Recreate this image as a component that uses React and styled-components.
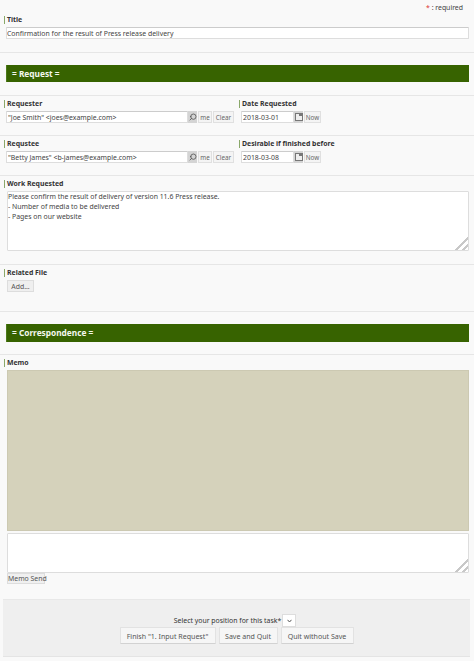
import styled, { createGlobalStyle } from 'styled-components';
import { Search } from 'lucide-react';

const GlobalStyle = createGlobalStyle`
    html, body {
        margin: 0;
        padding: 0;
        background: #f9f9f9;
    }
    * {
        box-sizing: border-box;
    }
`;

const Page = styled.div`
    width: 474px;
    height: 661px;
    overflow: hidden;
    color: #333;
    font-family: "Noto Sans", "Open Sans", sans-serif;
    font-size: 6.9px;
    background: #f9f9f9;
`;

const RequiredNote = styled.div`
    height: 15px;
    padding: 3px 11px 0 0;
    line-height: 9px;
    text-align: right;
    color: #444;

    span {
        color: #d33;
    }
`;

const Section = styled.section`
    border-top: 1px solid ${props => props.$plain ? 'transparent' : '#e6e6e6'};
    height: ${props => props.$height}px;
    padding-top: ${props => props.$top ?? 4}px;
`;

const Label = styled.div`
    margin-left: ${props => props.$left ?? 4}px;
    height: 8px;
    padding-left: 2px;
    border-left: 1px solid #8aa86a;
    line-height: 7px;
    font-size: 6.9px;
    font-weight: 700;
    color: #333;
`;

const TextBox = styled.input`
    display: block;
    flex: none;
    width: ${props => props.$width}px;
    height: 12px;
    margin: 0;
    padding: 0 1px;
    border: 1px solid #ddd;
    border-top-color: #ccc;
    border-radius: 1px;
    background: #fff;
    color: #444;
    font: inherit;
    outline: none;
`;

const TitleBox = styled(TextBox)`
    margin: 3px 0 0 6px;
    padding: 0;
`;

const Banner = styled.h2`
    margin: 12px 5px 0 6px;
    height: ${props => props.$height ?? 17}px;
    padding-left: 5px;
    background: #376300;
    border-left: 1px solid #4d7a1a;
    color: #f4f8ee;
    font-size: 8.3px;
    font-weight: 700;
    line-height: ${props => props.$height ?? 17}px;
`;

const Columns = styled.div`
    display: flex;
`;

const Column = styled.div`
    flex: none;
    width: ${props => props.$width}px;
`;

const Controls = styled.div`
    display: flex;
    align-items: center;
    margin: 3px 0 0 ${props => props.$left ?? 6}px;
`;

const SmallButton = styled.button`
    flex: none;
    width: ${props => props.$width}px;
    height: 12px;
    margin: 0 0 0 1px;
    padding: 0;
    border: 1px solid #e0e0e0;
    background: #f4f4f4;
    color: #666;
    font: inherit;
    font-size: 6.3px;
    line-height: 9px;
`;

const IconButton = styled.span`
    display: flex;
    align-items: center;
    justify-content: center;
    flex: none;
    width: 9px;
    height: 12px;
    background: #d4d4d4;
    color: #555;
`;

const MagnifierIcon = styled(Search)`
    width: 8px;
    height: 8px;
    transform: scaleX(-1);
`;

const TextArea = styled.textarea`
    display: block;
    width: 462px;
    height: ${props => props.$height}px;
    margin: ${props => props.$top ?? 0}px 0 0 7px;
    padding: 0;
    border: 1px solid #ddd;
    border-radius: 1px;
    background: #fff;
    color: #444;
    font: inherit;
    line-height: 10px;
    outline: none;

    &::-webkit-resizer {
        background: linear-gradient(135deg, transparent 55%, #c8c8c8 55%, #c8c8c8 65%, transparent 65%, transparent 78%, #c8c8c8 78%, #c8c8c8 88%, transparent 88%);
    }
`;

const AddButton = styled.button`
    display: block;
    width: 27px;
    height: 12px;
    margin: 3px 0 0 7px;
    padding: 0;
    border: 1px solid #ddd;
    background: #efefef;
    color: #555;
    font: inherit;
    line-height: 9px;
`;

const MemoLog = styled.div`
    width: 462px;
    height: 161px;
    margin: 3px 0 0 7px;
    background: #d5d2bb;
    border: 1px solid #ccc9b2;
`;

const MemoSend = styled.button`
    display: block;
    width: 38px;
    height: 11px;
    margin: 0 0 0 7px;
    padding: 0;
    border: 1px solid #ddd;
    background: #f0f0f0;
    color: #555;
    font: inherit;
    line-height: 9px;
    white-space: nowrap;
`;

const Footer = styled.footer`
    display: flex;
    flex-direction: column;
    align-items: center;
    width: 467px;
    height: 58px;
    margin: 15px 0 0 3px;
    padding-top: 14px;
    background: #efefef;
    border-top: 1px solid #e8e8e8;
    border-bottom: 1px solid #e4e4e4;
`;

const PositionRow = styled.div`
    display: flex;
    align-items: center;
    height: 13px;
    gap: 1px;
    padding-right: 3px;
    color: #333;
`;

const PositionSelect = styled.span`
    display: flex;
    align-items: center;
    justify-content: center;
    width: 14px;
    height: 13px;
    background: #fff;
    border: 1px solid #ddd;
    color: #555;
`;

const ActionRow = styled.div`
    display: flex;
    gap: 3px;
`;

const ActionButton = styled.button`
    width: ${props => props.$width}px;
    height: 17px;
    margin: 0;
    padding: 0;
    border: 1px solid #e2e2e2;
    border-bottom-color: #d2d2d2;
    border-radius: 1px;
    background: #f6f6f6;
    color: #555;
    font: inherit;
    font-size: 7.05px;
`;

function PersonField({ label, value }) {
    return (
        <Column $width={236}>
            <Label $left={4}>{label}</Label>
            <Controls>
                <TextBox $width={182} defaultValue={value} />
                <IconButton><MagnifierIcon strokeWidth={2.5} /></IconButton>
                <SmallButton $width={14}>me</SmallButton>
                <SmallButton $width={21}>Clear</SmallButton>
            </Controls>
        </Column>
    );
}

function DateField({ label, value }) {
    return (
        <Column $width={238}>
            <Label $left={3}>{label}</Label>
            <Controls $left={5}>
                <TextBox $width={53} defaultValue={value} />
                <IconButton>
                    <svg width="8" height="8" viewBox="0 0 8 8">
                        <rect x="0.5" y="0.5" width="7" height="7" fill="#eee" stroke="#777" />
                        <rect x="4" y="1" width="3" height="2" fill="#777" />
                    </svg>
                </IconButton>
                <SmallButton $width={17}>Now</SmallButton>
            </Controls>
        </Column>
    );
}

export default function App() {
    return (
        <Page>
            <GlobalStyle />
            <RequiredNote><span>*</span> : required</RequiredNote>
            <Section $plain $height={37} $top={0}>
                <Label>Title</Label>
                <TitleBox $width={463} defaultValue="Confirmation for the result of Press release delivery" />
            </Section>
            <Section $height={43} $top={0}>
                <Banner>= Request =</Banner>
            </Section>
            <Section $height={40}>
                <Columns>
                    <PersonField label="Requester" value={'"Joe Smith" <joes@example.com>'} />
                    <DateField label="Date Requested" value="2018-03-01" />
                </Columns>
            </Section>
            <Section $height={40}>
                <Columns>
                    <PersonField label="Requstee" value={'"Betty James" <b-james@example.com>'} />
                    <DateField label="Desirable if finished before" value="2018-03-08" />
                </Columns>
            </Section>
            <Section $height={89}>
                <Label>Work Requested</Label>
                <TextArea
                    $top={3}
                    $height={60}
                    defaultValue={'Please confirm the result of delivery of version 11.6 Press release.\n- Number of media to be delivered\n- Pages on our website'}
                />
            </Section>
            <Section $height={47}>
                <Label>Related File</Label>
                <AddButton>Add...</AddButton>
            </Section>
            <Section $height={43} $top={0}>
                <Banner $height={18}>= Correspondence =</Banner>
            </Section>
            <Section>
                <Label>Memo</Label>
                <MemoLog />
                <TextArea $top={2} $height={40} />
                <MemoSend>Memo Send</MemoSend>
            </Section>
            <Footer>
                <PositionRow>
                    Select your position for this task*
                    <PositionSelect>
                        <svg width="5" height="4" viewBox="0 0 5 4">
                            <path d="M0.5 0.8 L2.5 3 L4.5 0.8" fill="none" stroke="#555" />
                        </svg>
                    </PositionSelect>
                </PositionRow>
                <ActionRow>
                    <ActionButton $width={96}>Finish "1. Input Request"</ActionButton>
                    <ActionButton $width={59}>Save and Quit</ActionButton>
                    <ActionButton $width={73}>Quit without Save</ActionButton>
                </ActionRow>
            </Footer>
        </Page>
    );
}
